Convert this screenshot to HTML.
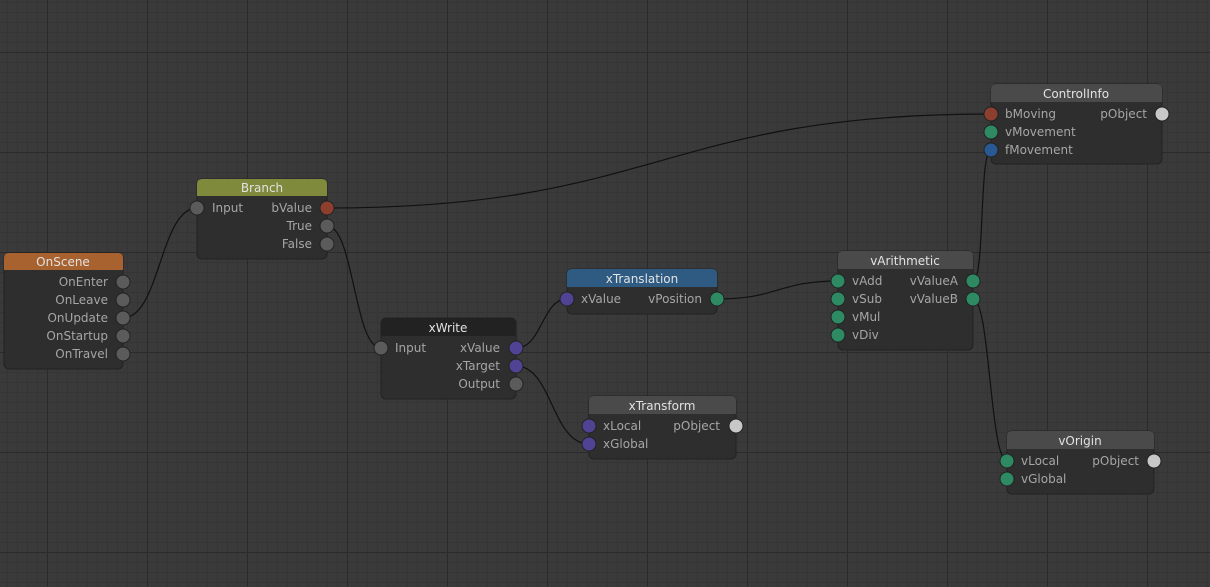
<!DOCTYPE html>
<html><head><meta charset="utf-8"><style>
html,body{margin:0;padding:0;}
body{width:1210px;height:587px;overflow:hidden;background-color:#3a3a3a;
background-image:
linear-gradient(to right,#2b2b2b 1px,transparent 1px),
linear-gradient(to bottom,#2b2b2b 1px,transparent 1px),
linear-gradient(to right,#353535 1px,transparent 1px),
linear-gradient(to bottom,#353535 1px,transparent 1px);
background-size:100px 100px,100px 100px,10px 10px,10px 10px;
background-position:47px 0,0 52px,7px 0,0 2px;}
svg{position:absolute;left:0;top:0;}
text{font-family:"DejaVu Sans","Liberation Sans",sans-serif;font-size:12px;fill:#a6a6a6;}
.h{fill:#e2e2e2;text-anchor:middle;font-size:12px;font-weight:500;}
.r{text-anchor:end;}
</style></head><body>
<svg width="1210" height="587" viewBox="0 0 1210 587">
<g fill="none" stroke="#111" stroke-width="1.2">
<path d="M123 318 C160 318 160 208 197 208"/>
<path d="M327 208 C660 208 660 114 991 114"/>
<path d="M327 226 C354 226 354 348 381 348"/>
<path d="M516 348 C542 348 542 299 567 299"/>
<path d="M516 366 C552 366 552 444 589 444"/>
<path d="M717 299 C778 299 778 281 838 281"/>
<path d="M973 281 C985 281 979 150 991 150"/>
<path d="M973 299 C990 299 990 461 1007 461"/>
</g>

<rect x="4" y="253" width="119" height="116" rx="5" fill="#2e2e2e" stroke="#222"/>
<path d="M4 270 V258 Q4 253 9 253 H118 Q123 253 123 258 V270 Z" fill="#a8622f"/>
<text x="63" y="266" class="h">OnScene</text>
<text x="108" y="286" class="r">OnEnter</text>
<text x="108" y="304" class="r">OnLeave</text>
<text x="108" y="322" class="r">OnUpdate</text>
<text x="108" y="340" class="r">OnStartup</text>
<text x="108" y="358" class="r">OnTravel</text>

<rect x="197" y="179" width="130" height="80" rx="5" fill="#2e2e2e" stroke="#222"/>
<path d="M197 196 V184 Q197 179 202 179 H322 Q327 179 327 184 V196 Z" fill="#7f8a3d"/>
<text x="262" y="192" class="h">Branch</text>
<text x="212" y="212">Input</text>
<text x="312" y="212" class="r">bValue</text>
<text x="312" y="230" class="r">True</text>
<text x="312" y="248" class="r">False</text>

<rect x="381" y="318" width="135" height="81" rx="5" fill="#2e2e2e" stroke="#222"/>
<path d="M381 336 V323 Q381 318 386 318 H511 Q516 318 516 323 V336 Z" fill="#222"/>
<text x="448" y="332" class="h">xWrite</text>
<text x="395" y="352">Input</text>
<text x="500" y="352" class="r">xValue</text>
<text x="500" y="370" class="r">xTarget</text>
<text x="500" y="388" class="r">Output</text>

<rect x="567" y="269" width="150" height="45" rx="5" fill="#2e2e2e" stroke="#222"/>
<path d="M567 287 V274 Q567 269 572 269 H712 Q717 269 717 274 V287 Z" fill="#2f5b82"/>
<text x="642" y="283" class="h">xTranslation</text>
<text x="581" y="303">xValue</text>
<text x="702" y="303" class="r">vPosition</text>

<rect x="589" y="396" width="147" height="63" rx="5" fill="#2e2e2e" stroke="#222"/>
<path d="M589 414 V401 Q589 396 594 396 H731 Q736 396 736 401 V414 Z" fill="#4a4a4a"/>
<text x="662" y="410" class="h">xTransform</text>
<text x="603" y="430">xLocal</text>
<text x="603" y="448">xGlobal</text>
<text x="720" y="430" class="r">pObject</text>

<rect x="838" y="251" width="135" height="99" rx="5" fill="#2e2e2e" stroke="#222"/>
<path d="M838 269 V256 Q838 251 843 251 H968 Q973 251 973 256 V269 Z" fill="#4a4a4a"/>
<text x="905" y="265" class="h">vArithmetic</text>
<text x="852" y="285">vAdd</text>
<text x="852" y="303">vSub</text>
<text x="852" y="321">vMul</text>
<text x="852" y="339">vDiv</text>
<text x="958" y="285" class="r">vValueA</text>
<text x="958" y="303" class="r">vValueB</text>

<rect x="991" y="84" width="171" height="80" rx="5" fill="#2e2e2e" stroke="#222"/>
<path d="M991 102 V89 Q991 84 996 84 H1157 Q1162 84 1162 89 V102 Z" fill="#4a4a4a"/>
<text x="1076" y="98" class="h">ControlInfo</text>
<text x="1005" y="118">bMoving</text>
<text x="1005" y="136">vMovement</text>
<text x="1005" y="154">fMovement</text>
<text x="1147" y="118" class="r">pObject</text>

<rect x="1007" y="431" width="147" height="63" rx="5" fill="#2e2e2e" stroke="#222"/>
<path d="M1007 449 V436 Q1007 431 1012 431 H1149 Q1154 431 1154 436 V449 Z" fill="#4a4a4a"/>
<text x="1080" y="445" class="h">vOrigin</text>
<text x="1021" y="465">vLocal</text>
<text x="1021" y="483">vGlobal</text>
<text x="1139" y="465" class="r">pObject</text>

<g stroke="#222" stroke-width="1">
<g fill="#5b5b5b">
<circle cx="123" cy="282" r="7"/><circle cx="123" cy="300" r="7"/><circle cx="123" cy="318" r="7"/><circle cx="123" cy="336" r="7"/><circle cx="123" cy="354" r="7"/>
<circle cx="197" cy="208" r="7"/><circle cx="327" cy="226" r="7"/><circle cx="327" cy="244" r="7"/>
<circle cx="381" cy="348" r="7"/><circle cx="516" cy="384" r="7"/>
</g>
<g fill="#8d3f2f"><circle cx="327" cy="208" r="7"/><circle cx="991" cy="114" r="7"/></g>
<g fill="#514394"><circle cx="516" cy="348" r="7"/><circle cx="516" cy="366" r="7"/><circle cx="567" cy="299" r="7"/><circle cx="589" cy="426" r="7"/><circle cx="589" cy="444" r="7"/></g>
<g fill="#2e8a63"><circle cx="717" cy="299" r="7"/><circle cx="838" cy="281" r="7"/><circle cx="838" cy="299" r="7"/><circle cx="838" cy="317" r="7"/><circle cx="838" cy="335" r="7"/><circle cx="973" cy="281" r="7"/><circle cx="973" cy="299" r="7"/><circle cx="991" cy="132" r="7"/><circle cx="1007" cy="461" r="7"/><circle cx="1007" cy="479" r="7"/></g>
<g fill="#2a5892"><circle cx="991" cy="150" r="7"/></g>
<g fill="#c8c8c8"><circle cx="736" cy="426" r="7"/><circle cx="1162" cy="114" r="7"/><circle cx="1154" cy="461" r="7"/></g>
</g>
</svg>
</body></html>
